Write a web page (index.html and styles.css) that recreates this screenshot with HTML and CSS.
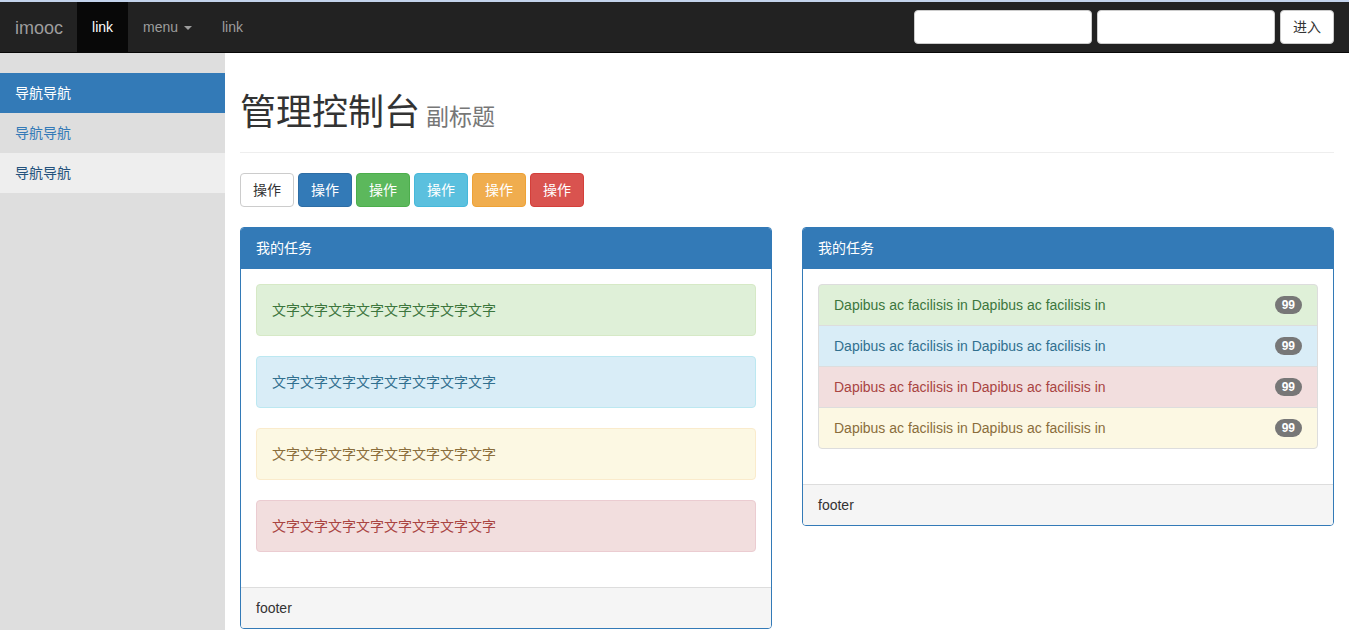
FILE: index.html
```html
<!DOCTYPE html>
<html lang="zh-CN">
<head>
<meta charset="utf-8">
<title>imooc</title>
<link rel="stylesheet" href="styles.css">
</head>
<body>
<nav class="navbar">
  <div class="brand">imooc</div>
  <ul class="nav">
    <li class="nav-item active">link</li>
    <li class="nav-item">menu <span class="caret"></span></li>
    <li class="nav-item">link</li>
  </ul>
  <form class="navbar-form">
    <input class="form-control" type="text">
    <input class="form-control" type="text">
    <button class="btn btn-default" type="button">进入</button>
  </form>
</nav>
<div class="layout">
  <aside class="sidebar">
    <a class="side-item active">导航导航</a>
    <a class="side-item">导航导航</a>
    <a class="side-item hover">导航导航</a>
  </aside>
  <main class="main">
    <div class="page-header">
      <h1 class="title">管理控制台<small class="subtitle">副标题</small></h1>
    </div>
    <div class="btns">
      <button class="btn btn-default" type="button">操作</button>
      <button class="btn btn-primary" type="button">操作</button>
      <button class="btn btn-success" type="button">操作</button>
      <button class="btn btn-info" type="button">操作</button>
      <button class="btn btn-warning" type="button">操作</button>
      <button class="btn btn-danger" type="button">操作</button>
    </div>
    <div class="row">
      <div class="panel">
        <div class="panel-heading">我的任务</div>
        <div class="panel-body">
          <div class="alert alert-success">文字文字文字文字文字文字文字文字</div>
          <div class="alert alert-info">文字文字文字文字文字文字文字文字</div>
          <div class="alert alert-warning">文字文字文字文字文字文字文字文字</div>
          <div class="alert alert-danger">文字文字文字文字文字文字文字文字</div>
        </div>
        <div class="panel-footer">footer</div>
      </div>
      <div class="panel">
        <div class="panel-heading">我的任务</div>
        <div class="panel-body">
          <ul class="list-group">
            <li class="list-item item-success"><span>Dapibus ac facilisis in Dapibus ac facilisis in</span><span class="badge">99</span></li>
            <li class="list-item item-info"><span>Dapibus ac facilisis in Dapibus ac facilisis in</span><span class="badge">99</span></li>
            <li class="list-item item-danger"><span>Dapibus ac facilisis in Dapibus ac facilisis in</span><span class="badge">99</span></li>
            <li class="list-item item-warning"><span>Dapibus ac facilisis in Dapibus ac facilisis in</span><span class="badge">99</span></li>
          </ul>
        </div>
        <div class="panel-footer">footer</div>
      </div>
    </div>
  </main>
</div>
</body>
</html>
```
FILE: styles.css
```css
* { box-sizing: border-box; }
html, body { margin: 0; padding: 0; }
body {
  font-family: "Liberation Sans", "Noto Sans CJK SC", sans-serif;
  font-size: 14px;
  line-height: 20px;
  color: #333;
  background: #fff;
  height: 630px;
  display: flex;
  flex-direction: column;
  overflow: hidden;
}

.navbar {
  display: flex;
  align-items: stretch;
  height: 53px;
  background: #222;
  border-top: 2px solid #c3d3ec;
  border-bottom: 1px solid #080808;
  padding: 0 15px;
  flex-shrink: 0;
}
.brand {
  font-size: 18px;
  line-height: 20px;
  padding: 16px 15px 14px 0;
  color: #9d9d9d;
}
.nav {
  list-style: none;
  margin: 0 0 0 -1px;
  padding: 0;
  display: flex;
}
.nav-item {
  padding: 15px 15px 14px;
  color: #9d9d9d;
  line-height: 20px;
}
.nav-item.active {
  background: #080808;
  color: #fff;
}
.caret {
  display: inline-block;
  width: 0;
  height: 0;
  margin-left: 2px;
  vertical-align: middle;
  border-top: 4px solid #9d9d9d;
  border-left: 4px solid transparent;
  border-right: 4px solid transparent;
}
.navbar-form {
  margin: 0 0 0 auto;
  display: flex;
  align-items: flex-start;
  gap: 5px;
  padding-top: 8px;
}
.form-control {
  width: 178px;
  height: 34px;
  border: 1px solid #ccc;
  border-radius: 4px;
  background: #fff;
  padding: 6px 12px;
  font: inherit;
}

.btn {
  display: inline-block;
  height: 34px;
  padding: 6px 12px;
  font-family: inherit;
  font-size: 14px;
  line-height: 20px;
  border: 1px solid transparent;
  border-radius: 4px;
  cursor: pointer;
}
.btn-default { background: #fff; color: #333; border-color: #ccc; }
.btn-primary { background: #337ab7; color: #fff; border-color: #2e6da4; }
.btn-success { background: #5cb85c; color: #fff; border-color: #4cae4c; }
.btn-info { background: #5bc0de; color: #fff; border-color: #46b8da; }
.btn-warning { background: #f0ad4e; color: #fff; border-color: #eea236; }
.btn-danger { background: #d9534f; color: #fff; border-color: #d43f3a; }

.layout {
  display: flex;
  flex: 1;
  min-height: 0;
}
.sidebar {
  width: 225px;
  flex-shrink: 0;
  background: #dedede;
  padding-top: 20px;
  display: flex;
  flex-direction: column;
}
.side-item {
  display: block;
  height: 40px;
  padding: 10px 15px;
  color: #337ab7;
}
.side-item.active { background: #337ab7; color: #fff; }
.side-item.hover { background: #eee; color: #23527c; }

.main {
  flex: 1;
  padding: 0 15px;
}
.page-header {
  margin: 40px 0 20px;
  padding-bottom: 9px;
  border-bottom: 1px solid #eee;
}
.title {
  margin: 0 0 10px;
  height: 40px;
  display: flex;
  align-items: baseline;
  font-size: 36px;
  font-weight: 400;
  line-height: 40px;
  color: #333;
}
.subtitle {
  margin-left: 6px;
  font-size: 23px;
  font-weight: 400;
  line-height: 1;
  color: #777;
}
.btns {
  display: flex;
  gap: 4px;
  margin-bottom: 20px;
}

.row {
  display: grid;
  grid-template-columns: 1fr 1fr;
  gap: 30px;
  align-items: start;
}
.panel {
  border: 1px solid #337ab7;
  border-radius: 4px;
  background: #fff;
  overflow: hidden;
}
.panel-heading {
  background: #337ab7;
  color: #fff;
  padding: 10px 15px;
  border-bottom: 1px solid #337ab7;
}
.panel-body { padding: 15px; }
.panel-footer {
  background: #f5f5f5;
  border-top: 1px solid #ddd;
  padding: 10px 15px;
}

.alert {
  padding: 15px;
  margin-bottom: 20px;
  border: 1px solid transparent;
  border-radius: 4px;
}
.alert-success { background: #dff0d8; border-color: #d6e9c6; color: #3c763d; }
.alert-info { background: #d9edf7; border-color: #bce8f1; color: #31708f; }
.alert-warning { background: #fcf8e3; border-color: #faebcc; color: #8a6d3b; }
.alert-danger { background: #f2dede; border-color: #ebccd1; color: #a94442; }

.list-group {
  list-style: none;
  margin: 0 0 20px;
  padding: 0;
}
.list-item {
  display: flex;
  justify-content: space-between;
  align-items: center;
  padding: 10px 15px;
  border: 1px solid #ddd;
  margin-bottom: -1px;
}
.list-item:first-child { border-radius: 4px 4px 0 0; }
.list-item:last-child { border-radius: 0 0 4px 4px; margin-bottom: 0; }
.item-success { background: #dff0d8; color: #3c763d; }
.item-info { background: #d9edf7; color: #31708f; }
.item-danger { background: #f2dede; color: #a94442; }
.item-warning { background: #fcf8e3; color: #8a6d3b; }
.badge {
  display: inline-block;
  min-width: 10px;
  padding: 3px 7px;
  font-size: 12px;
  font-weight: 700;
  line-height: 12px;
  color: #fff;
  background: #777;
  border-radius: 10px;
  text-align: center;
}
```
